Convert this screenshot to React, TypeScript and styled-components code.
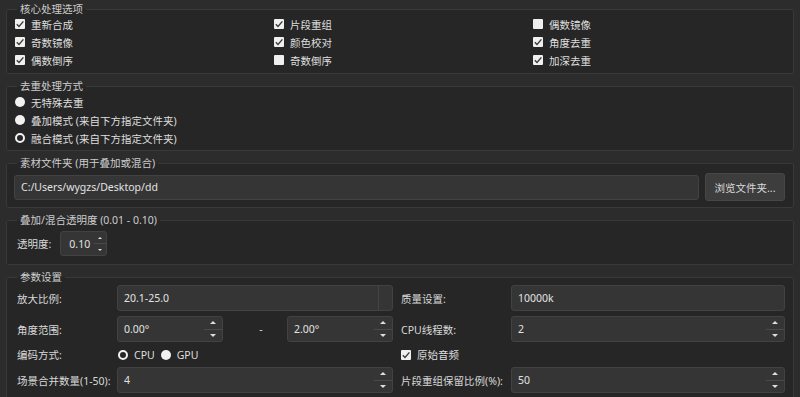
import React from "react";
import styled, { createGlobalStyle } from "styled-components";

const Global = createGlobalStyle`
  html, body {
    margin: 0;
    background: #2c2c2c;
  }
  body {
    font-family: "Noto Sans", "Noto Sans CJK SC", sans-serif;
    font-size: 10.5px;
    color: #dadada;
  }
`;

const Page = styled.div`
  width: 800px;
  height: 397px;
  box-sizing: border-box;
  padding: 3px 6px 0;
  display: flex;
  flex-direction: column;
  gap: 6px;
  overflow: hidden;
`;

const Group = styled.fieldset<{ $pt: number; $pb: number; $pl: number; $pr: number }>`
  margin: 0;
  min-width: 0;
  border: 1px solid #393939;
  border-radius: 2px;
  background: #262626;
  padding: ${(p) => `${p.$pt}px ${p.$pr}px ${p.$pb}px ${p.$pl}px`};
  flex-shrink: 0;
`;

const Legend = styled.legend<{ $ml: number }>`
  padding: 0 3px;
  margin-left: ${(p) => p.$ml}px;
  line-height: 12px;
  font-size: 10.5px;
  color: #cdcdcd;
`;

const CheckGrid = styled.div`
  display: grid;
  grid-template-columns: repeat(3, 259px);
  grid-auto-rows: 16px;
  row-gap: 2px;
`;

const RadioList = styled.div`
  display: flex;
  flex-direction: column;
  gap: 2px;
`;

const Option = styled.label`
  display: flex;
  align-items: center;
  gap: 6px;
  height: 16px;
  white-space: nowrap;
  color: #dedede;
`;

const Box = styled.span<{ $on: boolean }>`
  width: 10px;
  height: 10px;
  flex-shrink: 0;
  background: #f0f0f0;
  border-radius: 1px;
  display: flex;
  align-items: center;
  justify-content: center;
  svg {
    display: ${(p) => (p.$on ? "block" : "none")};
  }
`;

const Dot = styled.span<{ $on: boolean }>`
  width: 10px;
  height: 10px;
  flex-shrink: 0;
  box-sizing: border-box;
  border-radius: 50%;
  background: ${(p) => (p.$on ? "#262626" : "#f2f2f2")};
  border: ${(p) => (p.$on ? "2.5px solid #f2f2f2" : "none")};
`;

const Check = ({ on, label }: { on: boolean; label: string }) => (
  <Option>
    <Box $on={on}>
      <svg width="10" height="10" viewBox="0 0 10 10">
        <polyline points="1.8,5.2 4,7.4 8.4,2.4" fill="none" stroke="#3a3a3a" strokeWidth="1.4" />
      </svg>
    </Box>
    {label}
  </Option>
);

const Radio = ({ on, label }: { on: boolean; label: string }) => (
  <Option>
    <Dot $on={on} />
    {label}
  </Option>
);

const FolderRow = styled.div`
  display: flex;
  align-items: center;
  gap: 6px;
  height: 28px;
`;

const Field = styled.div<{ $w?: number; $h?: number }>`
  display: flex;
  align-items: stretch;
  box-sizing: border-box;
  height: ${(p) => p.$h ?? 26}px;
  width: ${(p) => (p.$w ? `${p.$w}px` : "auto")};
  flex: ${(p) => (p.$w ? "none" : "1")};
  background: #353535;
  border: 1px solid #424242;
  border-radius: 3px;
  color: #e2e2e2;
`;

const FieldText = styled.span<{ $pl?: number }>`
  flex: 1;
  display: flex;
  align-items: center;
  padding-left: ${(p) => p.$pl ?? 6}px;
  white-space: nowrap;
  overflow: hidden;
`;

const DropPart = styled.span`
  width: 13px;
  border-left: 1px solid #454545;
`;

const Button = styled.button`
  width: 80px;
  height: 28px;
  box-sizing: border-box;
  background: #3d3d3d;
  border: 1px solid #474747;
  border-radius: 3px;
  color: #dadada;
  font: inherit;
  padding: 0;
`;

const Arrows = styled.span<{ $w: number }>`
  width: ${(p) => p.$w}px;
  display: flex;
  flex-direction: column;
`;

const ArrowHalf = styled.span<{ $up: boolean; $s: number }>`
  flex: 1;
  display: flex;
  align-items: center;
  justify-content: center;
  border-bottom: ${(p) => (p.$up ? "1px solid #4a4a4a" : "none")};
  &::after {
    content: "";
    border-left: ${(p) => p.$s}px solid transparent;
    border-right: ${(p) => p.$s}px solid transparent;
    ${(p) => (p.$up ? "border-bottom" : "border-top")}: ${(p) => p.$s}px solid #dedede;
  }
`;

const Spin = ({ value, w, h = 26, small = false }: { value: string; w?: number; h?: number; small?: boolean }) => (
  <Field $w={w} $h={h}>
    <FieldText $pl={small ? 8 : 6}>{value}</FieldText>
    <Arrows $w={small ? 12 : 18}>
      <ArrowHalf $up $s={small ? 2 : 3.5} />
      <ArrowHalf $up={false} $s={small ? 2 : 3.5} />
    </Arrows>
  </Field>
);

const OpacityRow = styled.div`
  display: flex;
  align-items: center;
  gap: 9px;
  padding-left: 2px;
`;

const ParamGrid = styled.div`
  display: grid;
  grid-template-columns: 100px 276px 118px 274px;
  grid-template-rows: 26px 26px 15px 26px;
  row-gap: 5px;
  align-items: center;
`;

const Label = styled.span<{ $right?: boolean }>`
  padding-left: ${(p) => (p.$right ? 8 : 0)}px;
  white-space: nowrap;
  color: #d8d8d8;
`;

const RangeRow = styled.div`
  display: grid;
  grid-template-columns: 106px 1fr 106px;
  align-items: center;
`;

const Dash = styled.span`
  text-align: center;
  padding-left: 12px;
`;

const InlineRadios = styled.div`
  display: flex;
  gap: 6px;
  padding-left: 1px;
`;

const CheckCell = styled.div`
  padding-left: 8px;
  grid-column: span 2;
`;

export default function App() {
  return (
    <>
      <Global />
      <Page>
        <Group $pt={1} $pb={5} $pl={8} $pr={1}>
          <Legend $ml={2}>核心处理选项</Legend>
          <CheckGrid>
            <Check on label="重新合成" />
            <Check on label="片段重组" />
            <Check on={false} label="偶数镜像" />
            <Check on label="奇数镜像" />
            <Check on label="颜色校对" />
            <Check on label="角度去重" />
            <Check on label="偶数倒序" />
            <Check on={false} label="奇数倒序" />
            <Check on label="加深去重" />
          </CheckGrid>
        </Group>

        <Group $pt={2} $pb={4} $pl={8} $pr={1}>
          <Legend $ml={2}>去重处理方式</Legend>
          <RadioList>
            <Radio on={false} label="无特殊去重" />
            <Radio on={false} label="叠加模式 (来自下方指定文件夹)" />
            <Radio on label="融合模式 (来自下方指定文件夹)" />
          </RadioList>
        </Group>

        <Group $pt={4} $pb={6} $pl={7} $pr={8}>
          <Legend $ml={3}>素材文件夹 (用于叠加或混合)</Legend>
          <FolderRow>
            <Field $h={25}>
              <FieldText>C:/Users/wygzs/Desktop/dd</FieldText>
            </Field>
            <Button>浏览文件夹...</Button>
          </FolderRow>
        </Group>

        <Group $pt={5} $pb={8} $pl={8} $pr={8}>
          <Legend $ml={2}>叠加/混合透明度 (0.01 - 0.10)</Legend>
          <OpacityRow>
            <Label>透明度:</Label>
            <Spin value="0.10" w={47} h={25} small />
          </OpacityRow>
        </Group>

        <Group $pt={2} $pb={6} $pl={10} $pr={8}>
          <Legend $ml={0}>参数设置</Legend>
          <ParamGrid>
            <Label>放大比例:</Label>
            <Field>
              <FieldText>20.1-25.0</FieldText>
              <DropPart />
            </Field>
            <Label $right>质量设置:</Label>
            <Field>
              <FieldText>10000k</FieldText>
            </Field>

            <Label>角度范围:</Label>
            <RangeRow>
              <Spin value="0.00°" />
              <Dash>-</Dash>
              <Spin value="2.00°" />
            </RangeRow>
            <Label $right>CPU线程数:</Label>
            <Spin value="2" />

            <Label>编码方式:</Label>
            <InlineRadios>
              <Radio on label="CPU" />
              <Radio on={false} label="GPU" />
            </InlineRadios>
            <CheckCell>
              <Check on label="原始音频" />
            </CheckCell>

            <Label>场景合并数量(1-50):</Label>
            <Spin value="4" />
            <Label $right>片段重组保留比例(%):</Label>
            <Spin value="50" />
          </ParamGrid>
        </Group>
      </Page>
    </>
  );
}
